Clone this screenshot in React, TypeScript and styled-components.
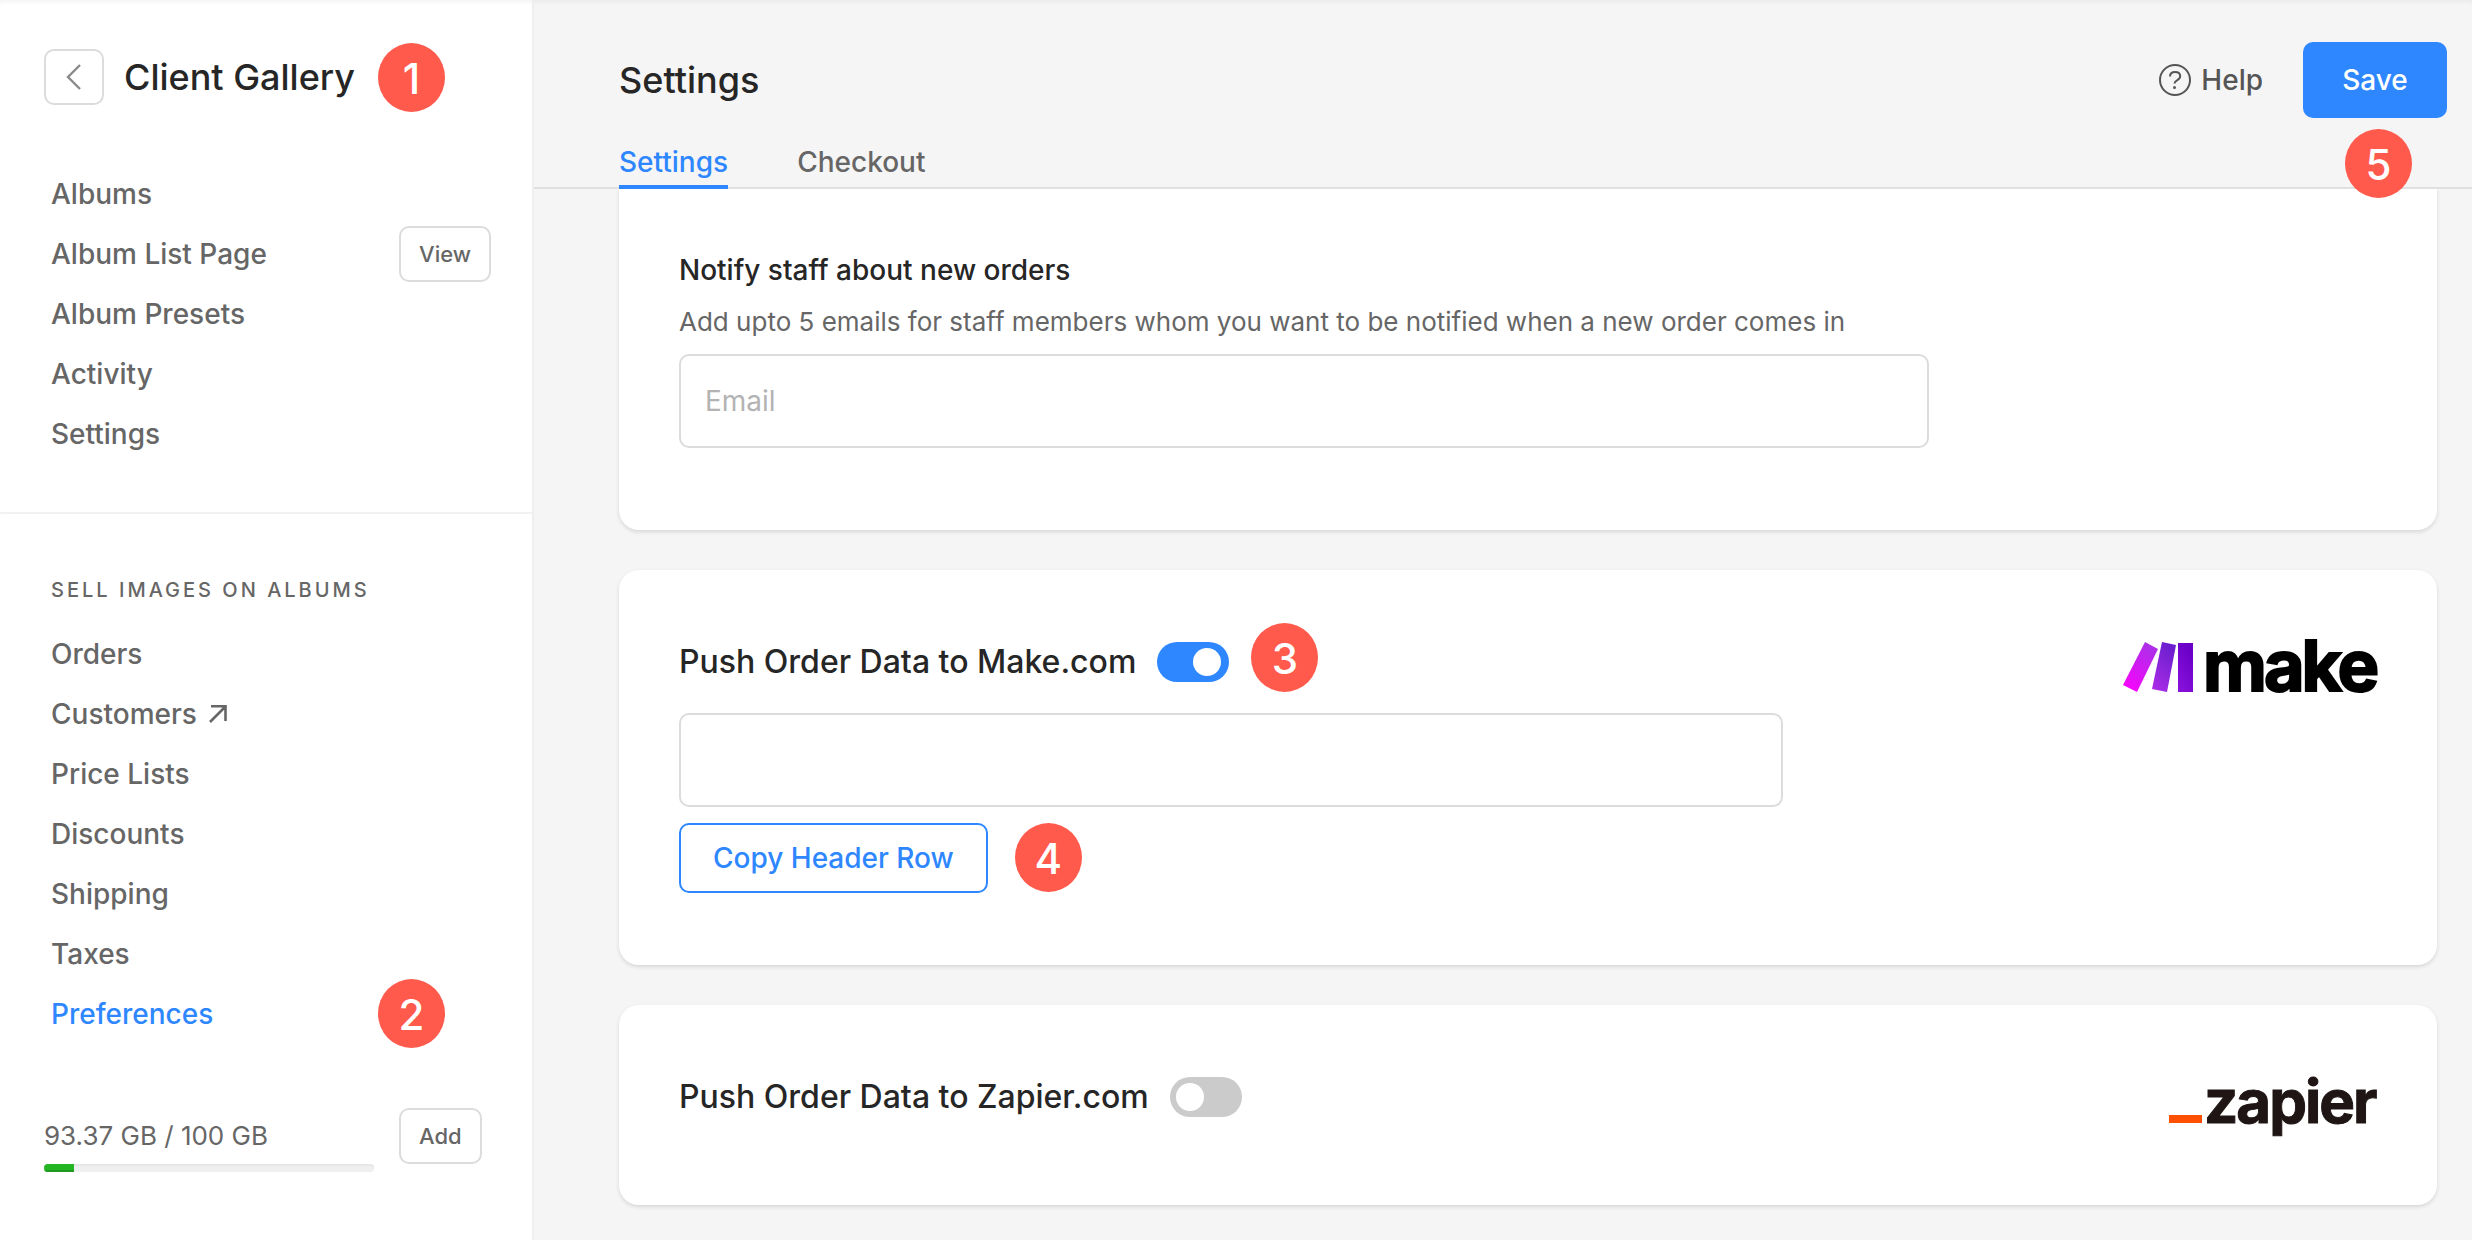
import React, { useState } from "react";
import styled, { createGlobalStyle, css } from "styled-components";

const blue = "#2e87ff";
const grey = "#666666";
const ink = "#262626";
const line = "#dcdcdc";

const GlobalStyle = createGlobalStyle`
  *, *::before, *::after { box-sizing: border-box; }
  body {
    margin: 0;
    background: #f5f5f5;
    color: ${ink};
    font-family: Inter, "Liberation Sans", sans-serif;
    font-size: 28px;
    line-height: 40px;
  }
  h1, h2, h3, p, ul { margin: 0; padding: 0; }
  button, input { font: inherit; }
  button { cursor: pointer; }
`;

const Page = styled.div`
  display: flex;
  min-height: 100vh;
  box-shadow: inset 0 4px 4px -2px rgba(0, 0, 0, 0.05);
`;

const Sidebar = styled.aside`
  flex: 0 0 534px;
  background: #fff;
  border-right: 2px solid #efefef;
  box-shadow: inset 0 4px 4px -2px rgba(0, 0, 0, 0.05);
`;

const SidebarHead = styled.header`
  position: relative;
  display: flex;
  align-items: center;
  gap: 20px;
  padding: 49px 44px 0;
`;

const outlined = css`
  display: flex;
  align-items: center;
  justify-content: center;
  height: 56px;
  border: 2px solid ${line};
  border-radius: 10px;
  background: #fff;
  color: ${grey};
`;

const BackButton = styled.button`
  ${outlined}
  width: 60px;
  padding: 0;
`;

const SmallButton = styled.button`
  ${outlined}
  flex: none;
  padding: 0 18px;
  font-size: 22px;
  font-weight: 500;
`;

const SidebarTitle = styled.h1`
  font-size: 36px;
  font-weight: 500;
`;

const Nav = styled.nav<{ $first?: boolean }>`
  padding: ${(p) => (p.$first ? "59px 41px 48px 51px" : "56px 41px 48px 51px")};
  border-bottom: ${(p) => (p.$first ? "2px solid #f2f2f2" : "none")};
`;

const NavHeading = styled.h2`
  margin-bottom: 14px;
  color: ${grey};
  font-size: 20px;
  font-weight: 500;
  letter-spacing: 3px;
  text-transform: uppercase;
`;

const NavList = styled.ul`
  list-style: none;
`;

const NavItem = styled.li`
  position: relative;
  display: flex;
  align-items: center;
  justify-content: space-between;
  height: 60px;
`;

const NavLink = styled.a<{ $active?: boolean }>`
  display: flex;
  align-items: center;
  gap: 12px;
  color: ${(p) => (p.$active ? blue : grey)};
  font-weight: 500;
  text-decoration: none;
`;

const Storage = styled.section`
  display: flex;
  align-items: flex-start;
  gap: 25px;
  padding: 16px 44px 0;
`;

const StorageInfo = styled.div`
  flex: 0 0 330px;
  padding-top: 8px;
  color: ${grey};
  font-size: 26px;
`;

const Meter = styled.div`
  height: 8px;
  margin-top: 8px;
  overflow: hidden;
  border-radius: 4px;
  background: #efefef;
  box-shadow: inset 0 2px 1px #e6e6e6;
`;

const MeterFill = styled.div`
  width: 30px;
  height: 100%;
  background: #23b623;
  box-shadow: inset 0 -2px 0 #219a21;
`;

const Main = styled.main`
  flex: 1;
  min-width: 0;
`;

const TopBar = styled.header`
  position: relative;
  padding: 42px 25px 0 85px;
  border-bottom: 2px solid #e0e0e0;
`;

const TitleRow = styled.div`
  display: flex;
  align-items: center;
  justify-content: space-between;
  height: 76px;
`;

const PageTitle = styled.h2`
  font-size: 36px;
  font-weight: 500;
`;

const Actions = styled.div`
  display: flex;
  align-items: center;
  gap: 40px;
`;

const HelpLink = styled.a`
  display: flex;
  align-items: center;
  gap: 9px;
  color: #555;
  font-weight: 500;
  text-decoration: none;
`;

const SaveButton = styled.button`
  width: 144px;
  height: 76px;
  border: 0;
  border-radius: 10px;
  background: ${blue};
  color: #fff;
  font-weight: 500;
`;

const Tabs = styled.div`
  display: flex;
  gap: 69px;
  margin: 24px 0 -2px;
`;

const Tab = styled.a<{ $active?: boolean }>`
  padding-bottom: 3px;
  border-bottom: 4px solid ${(p) => (p.$active ? blue : "transparent")};
  color: ${(p) => (p.$active ? blue : grey)};
  font-weight: 500;
  text-decoration: none;
`;

const Cards = styled.div`
  display: flex;
  flex-direction: column;
  gap: 40px;
  padding: 0 35px 35px 85px;
`;

const Card = styled.section<{ $open?: boolean; $bottom: number }>`
  display: flex;
  align-items: flex-start;
  justify-content: space-between;
  padding: ${(p) => (p.$open ? 61 : 72)}px 60px ${(p) => p.$bottom}px;
  border-radius: ${(p) => (p.$open ? "0 0 20px 20px" : "20px")};
  background: #fff;
  box-shadow: 0 2px 4px rgba(0, 0, 0, 0.12);
`;

const CardBody = styled.div`
  flex: 1;
  min-width: 0;
`;

const FieldTitle = styled.label`
  display: block;
  font-weight: 500;
`;

const FieldHint = styled.p`
  margin: 12px 0;
  color: ${grey};
  font-size: 26px;
`;

const TextInput = styled.input<{ $max: number }>`
  display: block;
  width: 100%;
  max-width: ${(p) => p.$max}px;
  height: 94px;
  padding: 0 24px;
  border: 2px solid ${line};
  border-radius: 10px;
  background: #fff;
  color: ${ink};
  &::placeholder { color: #b3b3b3; opacity: 1; }
`;

const SwitchRow = styled.div`
  position: relative;
  display: flex;
  align-items: center;
  gap: 21px;
  width: fit-content;
`;

const SwitchLabel = styled.label`
  font-size: 32px;
  font-weight: 500;
`;

const Switch = styled.input`
  display: flex;
  align-items: center;
  width: 72px;
  height: 40px;
  margin: 0;
  padding: 0 6px;
  appearance: none;
  border-radius: 20px;
  background: #cbcbcb;
  &::before {
    content: "";
    width: 28px;
    height: 28px;
    border-radius: 50%;
    background: #fff;
  }
  &:checked {
    justify-content: flex-end;
    padding: 0 8px;
    background: ${blue};
  }
`;

const WebhookFields = styled.div`
  display: flex;
  flex-direction: column;
  align-items: flex-start;
  gap: 16px;
  margin-top: 31px;
`;

const CopyButton = styled.button`
  position: relative;
  height: 70px;
  padding: 0 32px;
  border: 2px solid ${blue};
  border-radius: 10px;
  background: #fff;
  color: ${blue};
  font-weight: 500;
`;

const Marker = styled.span<{ $left?: number; $right?: number; $top: number }>`
  position: absolute;
  z-index: 1;
  ${(p) => (p.$left !== undefined ? `left: ${p.$left}px;` : `right: ${p.$right}px;`)}
  top: ${(p) => p.$top}px;
  display: flex;
  align-items: center;
  justify-content: center;
  width: 67px;
  height: 69px;
  padding-top: 2px;
  border-radius: 50%;
  background: #ff5a4c;
  color: #fff;
  font-size: 42px;
  font-weight: 500;
`;

const Logo = styled.svg`
  flex: none;
  display: block;
  overflow: visible;
  font-family: Inter, sans-serif;
  font-weight: 700;
`;

const ChevronLeft = () => (
  <svg width="16" height="26" viewBox="0 0 16 26" fill="none" stroke="#8a8a8a" strokeWidth="2.4">
    <path d="M14 1 2 13l12 12" />
  </svg>
);

const ArrowOut = () => (
  <svg width="18" height="20" viewBox="0 0 18 20" fill="none" stroke={grey} strokeWidth="2.6">
    <path d="M1 18 16 3M2 2.300h14.500V17" />
  </svg>
);

const HelpIcon = () => (
  <svg width="34" height="34" viewBox="0 0 34 34" fill="none" stroke="#555" strokeWidth="2">
    <circle cx="17" cy="17" r="15" />
    <path d="M12 13.500c0-3 2-4.500 5-4.500s5.200 1.500 5.200 4.200c0 4.300-5.400 3.300-5.700 7.300" />
    <circle cx="16.500" cy="24.500" r="1.500" fill="#555" stroke="none" />
  </svg>
);

const MakeLogo = () => (
  <Logo width="254" height="50" viewBox="0 0 254 50" role="img" aria-label="make">
    <defs>
      <linearGradient id="mk1" x1="0" y1="1" x2="0.500" y2="0">
        <stop offset="0" stopColor="#ff00ff" />
        <stop offset="1" stopColor="#b02de9" />
      </linearGradient>
      <linearGradient id="mk2" x1="0" y1="1" x2="0.500" y2="0">
        <stop offset="0" stopColor="#b02de9" />
        <stop offset="1" stopColor="#6d1fcf" />
      </linearGradient>
      <linearGradient id="mk3" x1="0" y1="1" x2="0.500" y2="0">
        <stop offset="0" stopColor="#8a12dc" />
        <stop offset="1" stopColor="#6a00c8" />
      </linearGradient>
    </defs>
    <path d="M22 0 35 7 14 50 0 43Z" fill="url(#mk1)" />
    <path d="M39 0 53 3 44 50 29 47Z" fill="url(#mk2)" />
    <path d="M55 1h15v49H55Z" fill="url(#mk3)" />
    <text x="80" y="49" fontSize="70" letterSpacing="-3" stroke="#000" strokeWidth="2">make</text>
  </Logo>
);

const ZapierLogo = () => (
  <Logo width="208" height="56" viewBox="0 0 208 56" role="img" aria-label="zapier">
    <path d="M0 38h33v8H0Z" fill="#ff4f00" />
    <text x="35" y="46" fontSize="60" letterSpacing="-2" fill="#201515" stroke="#201515" strokeWidth="1">zapier</text>
  </Logo>
);

type Item = { label: string; external?: boolean; action?: string; active?: boolean; marker?: string };

const galleryItems: Item[] = [
  { label: "Albums" },
  { label: "Album List Page", action: "View" },
  { label: "Album Presets" },
  { label: "Activity" },
  { label: "Settings" },
];

const salesItems: Item[] = [
  { label: "Orders" },
  { label: "Customers", external: true },
  { label: "Price Lists" },
  { label: "Discounts" },
  { label: "Shipping" },
  { label: "Taxes" },
  { label: "Preferences", active: true, marker: "2" },
];

const NavItems = ({ items }: { items: Item[] }) => (
  <NavList>
    {items.map((item) => (
      <NavItem key={item.label}>
        <NavLink href="#" $active={item.active}>
          {item.label}
          {item.external && <ArrowOut />}
        </NavLink>
        {item.action && <SmallButton type="button">{item.action}</SmallButton>}
        {item.marker && <Marker $left={327} $top={-5}>{item.marker}</Marker>}
      </NavItem>
    ))}
  </NavList>
);

export default function App() {
  const [make, setMake] = useState(true);
  const [zapier, setZapier] = useState(false);

  return (
    <>
      <GlobalStyle />
      <Page>
        <Sidebar>
          <SidebarHead>
            <BackButton type="button" aria-label="Back"><ChevronLeft /></BackButton>
            <SidebarTitle>Client Gallery</SidebarTitle>
            <Marker $left={378} $top={43}>1</Marker>
          </SidebarHead>
          <Nav $first aria-label="Client Gallery"><NavItems items={galleryItems} /></Nav>
          <Nav aria-label="Sell images on albums">
            <NavHeading>Sell images on albums</NavHeading>
            <NavItems items={salesItems} />
          </Nav>
          <Storage>
            <StorageInfo>
              93.37 GB / 100 GB
              <Meter><MeterFill /></Meter>
            </StorageInfo>
            <SmallButton type="button">Add</SmallButton>
          </Storage>
        </Sidebar>

        <Main>
          <TopBar>
            <TitleRow>
              <PageTitle>Settings</PageTitle>
              <Actions>
                <HelpLink href="#"><HelpIcon />Help</HelpLink>
                <SaveButton type="button">Save</SaveButton>
              </Actions>
            </TitleRow>
            <Tabs>
              <Tab href="#" $active>Settings</Tab>
              <Tab href="#">Checkout</Tab>
            </Tabs>
            <Marker $right={60} $top={129}>5</Marker>
          </TopBar>

          <Cards>
            <Card $open $bottom={82}>
              <CardBody>
                <FieldTitle htmlFor="email">Notify staff about new orders</FieldTitle>
                <FieldHint>
                  Add upto 5 emails for staff members whom you want to be notified when a new order comes in
                </FieldHint>
                <TextInput id="email" type="email" placeholder="Email" $max={1250} />
              </CardBody>
            </Card>

            <Card $bottom={72}>
              <CardBody>
                <SwitchRow>
                  <SwitchLabel htmlFor="make">Push Order Data to Make.com</SwitchLabel>
                  <Switch id="make" type="checkbox" role="switch" checked={make} onChange={() => setMake(!make)} />
                  <Marker $right={-89} $top={-19}>3</Marker>
                </SwitchRow>
                <WebhookFields>
                  <TextInput type="text" aria-label="Make.com webhook address" $max={1104} />
                  <CopyButton type="button">
                    Copy Header Row
                    <Marker $right={-96} $top={-2}>4</Marker>
                  </CopyButton>
                </WebhookFields>
              </CardBody>
              <MakeLogo />
            </Card>

            <Card $bottom={72}>
              <CardBody>
                <SwitchRow>
                  <SwitchLabel htmlFor="zapier">Push Order Data to Zapier.com</SwitchLabel>
                  <Switch id="zapier" type="checkbox" role="switch" checked={zapier} onChange={() => setZapier(!zapier)} />
                </SwitchRow>
              </CardBody>
              <ZapierLogo />
            </Card>
          </Cards>
        </Main>
      </Page>
    </>
  );
}
